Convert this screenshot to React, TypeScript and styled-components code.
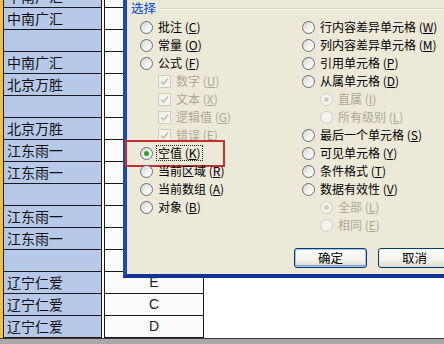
import React, { FC } from 'react';
import styled, { createGlobalStyle, css } from 'styled-components';

const GlobalStyle = createGlobalStyle`
  html, body {
    margin: 0;
    padding: 0;
    background: #ffffff;
    overflow: hidden;
  }
`;

const cjk = `"Noto Sans CJK SC", "Noto Sans", "DejaVu Sans", sans-serif`;

const Screen = styled.div`
  position: relative;
  width: 444px;
  height: 344px;
  overflow: hidden;
  background: #ffffff;
`;

/* ---------- sheet behind the dialog ---------- */

const Sheet = styled.div`
  display: flex;
  flex-direction: column;
  margin-top: -14px;
`;

const Row = styled.div`
  display: grid;
  grid-template-columns: 3px 99px 2px 100px 1fr;
  height: 22px;
`;

const RowEdge = styled.div`
  background: #f2c23a;
`;

const NameCell = styled.div`
  background: #b7c9e8;
  border-left: 1px solid #1a1a1a;
  border-right: 1px solid #1a1a1a;
  border-bottom: 1px solid #1a1a1a;
  font-family: ${cjk};
  font-size: 14px;
  color: #111;
  line-height: 21px;
  padding-left: 3px;
  white-space: nowrap;
  overflow: hidden;
`;

const Gap = styled.div`
  background: #ffffff;
`;

const GradeCell = styled.div`
  background: #fbfbfb;
  border-left: 1px solid #1a1a1a;
  border-right: 1px solid #1a1a1a;
  border-bottom: 1px solid #1a1a1a;
  font-family: "Liberation Sans", Arial, sans-serif;
  font-size: 14px;
  color: #222;
  line-height: 21px;
  text-align: center;
`;

const BottomBar = styled.div`
  height: 8px;
  background: #a9a9a9;
  border-top: 1px solid #3a3a3a;
`;

/* ---------- dialog ---------- */

const Dialog = styled.div`
  position: absolute;
  left: 123px;
  top: -40px;
  width: 346px;
  height: 318px;
  box-sizing: border-box;
  background: #ece9d8;
  border-left: 4px solid #1f48ad;
  border-right: 4px solid #1f48ad;
  border-bottom: 4px solid #14358f;
  display: flex;
  flex-direction: column;
  font-family: ${cjk};
  font-size: 12px;
`;

const GroupHeader = styled.div`
  display: flex;
  align-items: center;
  gap: 3px;
  height: 16px;
  margin-top: 40px;
  padding-left: 4px;
`;

const GroupTitle = styled.span`
  color: #0046d5;
  font-size: 12.5px;
  line-height: 16px;
`;

const GroupLine = styled.div`
  flex: 1;
  height: 1px;
  background: #d3d0bf;
  box-shadow: 0 1px 0 #f7f6f0;
`;

const Columns = styled.div`
  display: flex;
  padding-left: 13px;
  margin-top: 2px;
`;

const OptionColumn = styled.div<{ $width?: number }>`
  display: flex;
  flex-direction: column;
  width: ${({ $width }) => ($width ? `${$width}px` : 'auto')};
`;

const Option = styled.div<{ $indent?: boolean; $disabled?: boolean; $marked?: boolean }>`
  position: relative;
  display: flex;
  align-items: center;
  gap: 4px;
  height: 18px;
  padding-left: ${({ $indent }) => ($indent ? '18px' : '0')};
  color: ${({ $disabled }) => ($disabled ? '#aca899' : '#000')};
  white-space: nowrap;

  ${({ $marked }) =>
    $marked &&
    css`
      &::after {
        content: '';
        position: absolute;
        left: -15px;
        top: -4px;
        width: 96px;
        height: 23px;
        border: 2px solid #c4302d;
        pointer-events: none;
      }
    `}
`;

const Radio = styled.span<{ $checked?: boolean; $disabled?: boolean }>`
  position: relative;
  flex: none;
  width: 11px;
  height: 11px;
  border-radius: 50%;
  border: 1px solid ${({ $disabled }) => ($disabled ? '#cfcdc0' : '#5f7087')};
  background: ${({ $disabled }) =>
    $disabled
      ? '#f4f3ec'
      : 'linear-gradient(135deg, #d4d2c6 0%, #f4f3ee 55%, #ffffff 100%)'};

  ${({ $checked, $disabled }) =>
    $checked &&
    css`
      &::after {
        content: '';
        position: absolute;
        left: 3px;
        top: 3px;
        width: 5px;
        height: 5px;
        border-radius: 50%;
        background: ${$disabled ? '#cfcdc0' : '#2f9f2f'};
      }
    `}
`;

const Check = styled.span`
  flex: none;
  display: flex;
  align-items: center;
  justify-content: center;
  width: 11px;
  height: 11px;
  border: 1px solid #cfcdc0;
  background: #f4f3ec;
`;

const Label = styled.span<{ $focus?: boolean }>`
  line-height: 14px;
  padding: 0 1px;
  outline: ${({ $focus }) => ($focus ? '1px dotted #222' : 'none')};
`;

const Key = styled.span`
  text-decoration: underline;
`;

const ButtonRow = styled.div`
  display: flex;
  gap: 11px;
  margin-top: auto;
  padding: 0 0 6px 167px;
`;

const Button = styled.button<{ $primary?: boolean }>`
  width: 73px;
  height: 20px;
  padding: 0;
  border: 1px solid #003c74;
  border-radius: 3px;
  background: linear-gradient(#ffffff 0%, #f3f2ec 60%, #dcd8cc 100%);
  font-family: ${cjk};
  font-size: 12.5px;
  color: #000;
  line-height: 16px;
  box-shadow: ${({ $primary }) =>
    $primary ? 'inset 0 0 0 1px #a7c2ea, inset 0 -1px 0 1px #7da2ce' : 'none'};
`;

/* ---------- data ---------- */

const rows: { name?: string; grade?: string }[] = [
  { name: '中南广汇' },
  { name: '中南广汇' },
  {},
  { name: '中南广汇' },
  { name: '北京万胜' },
  {},
  { name: '北京万胜' },
  { name: '江东雨一' },
  { name: '江东雨一' },
  {},
  { name: '江东雨一' },
  { name: '江东雨一' },
  {},
  { name: '辽宁仁爱', grade: 'E' },
  { name: '辽宁仁爱', grade: 'C' },
  { name: '辽宁仁爱', grade: 'D' },
];

interface IOption {
  label: string;
  hotkey: string;
  kind?: 'radio' | 'check';
  indent?: boolean;
  disabled?: boolean;
  checked?: boolean;
  focus?: boolean;
  marked?: boolean;
}

const leftOptions: IOption[] = [
  { label: '批注', hotkey: 'C' },
  { label: '常量', hotkey: 'O' },
  { label: '公式', hotkey: 'F' },
  { label: '数字', hotkey: 'U', kind: 'check', indent: true, disabled: true },
  { label: '文本', hotkey: 'X', kind: 'check', indent: true, disabled: true },
  { label: '逻辑值', hotkey: 'G', kind: 'check', indent: true, disabled: true },
  { label: '错误', hotkey: 'E', kind: 'check', indent: true, disabled: true },
  { label: '空值', hotkey: 'K', checked: true, focus: true, marked: true },
  { label: '当前区域', hotkey: 'R' },
  { label: '当前数组', hotkey: 'A' },
  { label: '对象', hotkey: 'B' },
];

const rightOptions: IOption[] = [
  { label: '行内容差异单元格', hotkey: 'W' },
  { label: '列内容差异单元格', hotkey: 'M' },
  { label: '引用单元格', hotkey: 'P' },
  { label: '从属单元格', hotkey: 'D' },
  { label: '直属', hotkey: 'I', indent: true, disabled: true, checked: true },
  { label: '所有级别', hotkey: 'L', indent: true, disabled: true },
  { label: '最后一个单元格', hotkey: 'S' },
  { label: '可见单元格', hotkey: 'Y' },
  { label: '条件格式', hotkey: 'T' },
  { label: '数据有效性', hotkey: 'V' },
  { label: '全部', hotkey: 'L', indent: true, disabled: true, checked: true },
  { label: '相同', hotkey: 'E', indent: true, disabled: true },
];

const CheckMark: FC = () => (
  <svg width="9" height="9" viewBox="0 0 9 9">
    <polyline points="1,4.5 3.5,7 8,1.5" fill="none" stroke="#c4c2b4" strokeWidth="1.6" />
  </svg>
);

const OptionItem: FC<{ option: IOption }> = ({ option }) => (
  <Option $indent={option.indent} $disabled={option.disabled} $marked={option.marked}>
    {option.kind === 'check' ? (
      <Check>
        <CheckMark />
      </Check>
    ) : (
      <Radio $checked={option.checked} $disabled={option.disabled} />
    )}
    <Label $focus={option.focus}>
      {option.label} (<Key>{option.hotkey}</Key>)
    </Label>
  </Option>
);

const App: FC = () => (
  <Screen>
    <GlobalStyle />
    <Sheet>
      {rows.map((row, index) => (
        <Row key={index}>
          <RowEdge />
          <NameCell>{row.name}</NameCell>
          <Gap />
          <GradeCell>{row.grade}</GradeCell>
          <Gap />
        </Row>
      ))}
      <BottomBar />
    </Sheet>

    <Dialog>
      <GroupHeader>
        <GroupTitle>选择</GroupTitle>
        <GroupLine />
      </GroupHeader>
      <Columns>
        <OptionColumn $width={162}>
          {leftOptions.map((option) => (
            <OptionItem key={option.label} option={option} />
          ))}
        </OptionColumn>
        <OptionColumn>
          {rightOptions.map((option) => (
            <OptionItem key={option.label} option={option} />
          ))}
        </OptionColumn>
      </Columns>
      <ButtonRow>
        <Button $primary>确定</Button>
        <Button>取消</Button>
      </ButtonRow>
    </Dialog>
  </Screen>
);

export default App;
